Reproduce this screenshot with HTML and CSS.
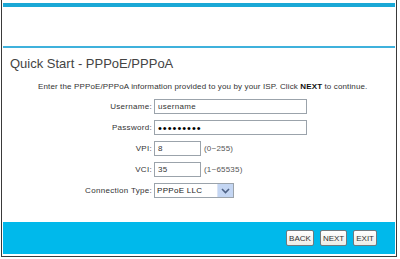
FILE: index.html
```html
<!DOCTYPE html>
<html>
<head>
<meta charset="utf-8">
<link rel="stylesheet" href="styles.css">
</head>
<body>
<div class="frame">
  <div class="top-bar"></div>
  <div class="header-space"></div>
  <div class="rule"></div>
  <div class="content">
    <h1 class="title">Quick Start - PPPoE/PPPoA</h1>
    <p class="intro">Enter the PPPoE/PPPoA information provided to you by your ISP. Click <b>NEXT</b> to continue.</p>
    <div class="form">
      <label class="lbl">Username:</label>
      <div class="field"><input class="inp wide" type="text" value="username"></div>
      <label class="lbl">Password:</label>
      <div class="field"><input class="inp wide pw" type="password" value="123456789"></div>
      <label class="lbl">VPI:</label>
      <div class="field"><input class="inp short" type="text" value="8"><span class="hint">(0~255)</span></div>
      <label class="lbl">VCI:</label>
      <div class="field"><input class="inp short" type="text" value="35"><span class="hint">(1~65535)</span></div>
      <label class="lbl">Connection Type:</label>
      <div class="field">
        <div class="select"><span class="sel-text">PPPoE LLC</span><span class="sel-btn"><svg width="9" height="6" viewBox="0 0 9 6"><path d="M1 1 L4.5 4.5 L8 1" fill="none" stroke="#4d6185" stroke-width="1.6"/></svg></span></div>
      </div>
    </div>
  </div>
  <div class="bottom-bar">
    <button class="btn">BACK</button>
    <button class="btn">NEXT</button>
    <button class="btn">EXIT</button>
  </div>
</div>
</body>
</html>
```
FILE: styles.css
```css
html, body {
  margin: 0;
  padding: 0;
  background: #fff;
}
body {
  font-family: "Liberation Sans", Arial, sans-serif;
}
.frame {
  margin-left: 1px;
  width: 392px;
  height: 251px;
  padding: 3px 1px 2px 1px;
  border-left: 1px solid #3a3a3a;
  border-right: 1px solid #3a3a3a;
  border-bottom: 1px solid #3a3a3a;
  display: flex;
  flex-direction: column;
}
.top-bar {
  height: 4px;
  background: #1aa8d6;
}
.header-space {
  height: 39px;
}
.rule {
  height: 2px;
  background: #3fb1dc;
}
.content {
  flex: 1;
  display: flex;
  flex-direction: column;
}
.title {
  margin: 7px 0 0 7px;
  font-size: 13px;
  font-weight: normal;
  color: #444;
  line-height: 17px;
}
.intro {
  margin: 10px 0 0 35px;
  font-size: 8px;
  letter-spacing: 0.13px;
  color: #333;
  line-height: 10px;
}
.intro b {
  color: #111;
}
.form {
  margin-top: 7px;
  display: grid;
  grid-template-columns: 149px auto;
  column-gap: 2px;
  row-gap: 6px;
  align-items: center;
}
.lbl {
  text-align: right;
  font-size: 8px;
  letter-spacing: 0.3px;
  color: #333;
}
.field {
  display: flex;
  align-items: center;
}
.inp {
  box-sizing: border-box;
  height: 15px;
  border: 1px solid #9ba3ab;
  padding: 0 3px;
  font-family: "Liberation Sans", Arial, sans-serif;
  font-size: 8px;
  letter-spacing: 0.3px;
  color: #333;
  margin: 0;
  background: #fff;
}
.wide { width: 153px; }
.short { width: 47px; }
.pw {
  color: #000;
  font-size: 11px;
  letter-spacing: 1px;
}
.hint {
  margin-left: 3px;
  font-size: 8px;
  letter-spacing: 0.2px;
  color: #555;
}
.select {
  box-sizing: border-box;
  width: 80px;
  height: 15px;
  border: 1px solid #9ba3ab;
  display: flex;
  align-items: center;
}
.sel-text {
  flex: 1;
  padding-left: 2px;
  font-size: 8px;
  letter-spacing: 0.3px;
  color: #222;
}
.sel-btn {
  width: 15px;
  height: 13px;
  background: #c4d6f3;
  border-left: 1px solid #dbe4f5;
  display: flex;
  align-items: center;
  justify-content: center;
}
.bottom-bar {
  height: 32px;
  background: #00b9eb;
  display: flex;
  align-items: center;
  justify-content: flex-end;
  gap: 6px;
  padding-right: 18px;
}
.btn {
  height: 16px;
  padding: 0 2px;
  border: 1px solid #6f7a80;
  border-radius: 2px;
  background: linear-gradient(#ffffff, #ecece6);
  font-family: "Liberation Sans", Arial, sans-serif;
  font-size: 8px;
  color: #333;
  margin: 0;
}
```
